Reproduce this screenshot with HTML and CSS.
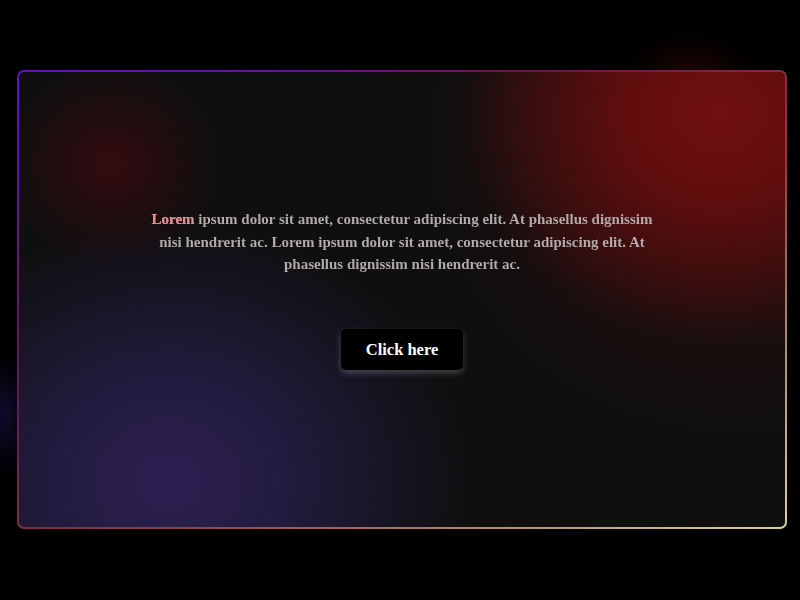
FILE: index.html
```html
<!DOCTYPE html>
<html>
<head>
<meta charset="utf-8">
<link rel="stylesheet" href="styles.css">
</head>
<body>
<div class="stage">
  <div class="glow glow-left"></div>
  <div class="glow glow-top"></div>
  <div class="card">
    <div class="card-inner">
      <p class="copy">Lorem ipsum dolor sit amet, consectetur adipiscing elit. At phasellus dignissim nisi hendrerit ac. Lorem ipsum dolor sit amet, consectetur adipiscing elit. At phasellus dignissim nisi hendrerit ac.</p>
      <button class="btn">Click here</button>
    </div>
  </div>
</div>
</body>
</html>
```

FILE: styles.css
```css
html, body {
  margin: 0;
  padding: 0;
  background: #000;
  width: 800px;
  height: 600px;
  overflow: hidden;
}
.stage {
  position: relative;
  padding: 70px 13px 0 17px;
}
.glow {
  position: absolute;
  border-radius: 50%;
  filter: blur(18px);
}
.glow-left {
  left: -30px;
  top: 375px;
  width: 50px;
  height: 80px;
  background: rgba(60, 40, 170, 0.3);
}
.glow-top {
  left: 650px;
  top: 62px;
  width: 80px;
  height: 30px;
  background: rgba(140, 20, 20, 0.4);
}
.card {
  position: relative;
  width: 770px;
  height: 459px;
  box-sizing: border-box;
  padding: 2px;
  border-radius: 7px;
  background: linear-gradient(to bottom right, #6410c8 0%, #6a1450 35%, #8a4040 60%, #d8d0a0 100%);
}
.card-inner {
  height: 100%;
  box-sizing: border-box;
  border-radius: 5px;
  background:
    radial-gradient(ellipse 260px 230px at 700px 40px, rgba(112, 15, 15, 1) 0%, rgba(108, 14, 14, 0.85) 35%, rgba(80, 10, 10, 0) 100%),
    radial-gradient(ellipse 320px 300px at 720px 70px, rgba(80, 10, 10, 0.5) 0%, rgba(60, 8, 8, 0) 100%),
    radial-gradient(ellipse 110px 100px at 92px 92px, rgba(55, 11, 15, 0.9) 0%, rgba(40, 8, 12, 0) 100%),
    radial-gradient(ellipse 300px 260px at 150px 410px, rgba(44, 32, 82, 1) 0%, rgba(40, 30, 75, 0.78) 40%, rgba(30, 24, 60, 0) 100%),
    #0f0f0f;
  display: flex;
  flex-direction: column;
  align-items: center;
  padding-top: 136px;
}
.copy {
  margin: 0;
  width: 514px;
  text-align: center;
  font-family: "Liberation Serif", serif;
  font-weight: bold;
  font-size: 15px;
  line-height: 22.5px;
  color: transparent;
  background:
    linear-gradient(90deg, #ee8a8c 0px, #ec8a8c 40px, rgba(179, 172, 172, 0) 54px) 0 0 / 100% 22px no-repeat,
    #b3acac;
  -webkit-background-clip: text;
  background-clip: text;
}
.btn {
  margin-top: 53px;
  background: #000;
  color: #fff;
  border: none;
  border-radius: 5px;
  padding: 11px 25px;
  font-family: "Liberation Serif", serif;
  font-weight: bold;
  font-size: 16.5px;
  line-height: 19px;
  box-shadow: 0 3px 6px rgba(190, 190, 210, 0.3);
}
```
